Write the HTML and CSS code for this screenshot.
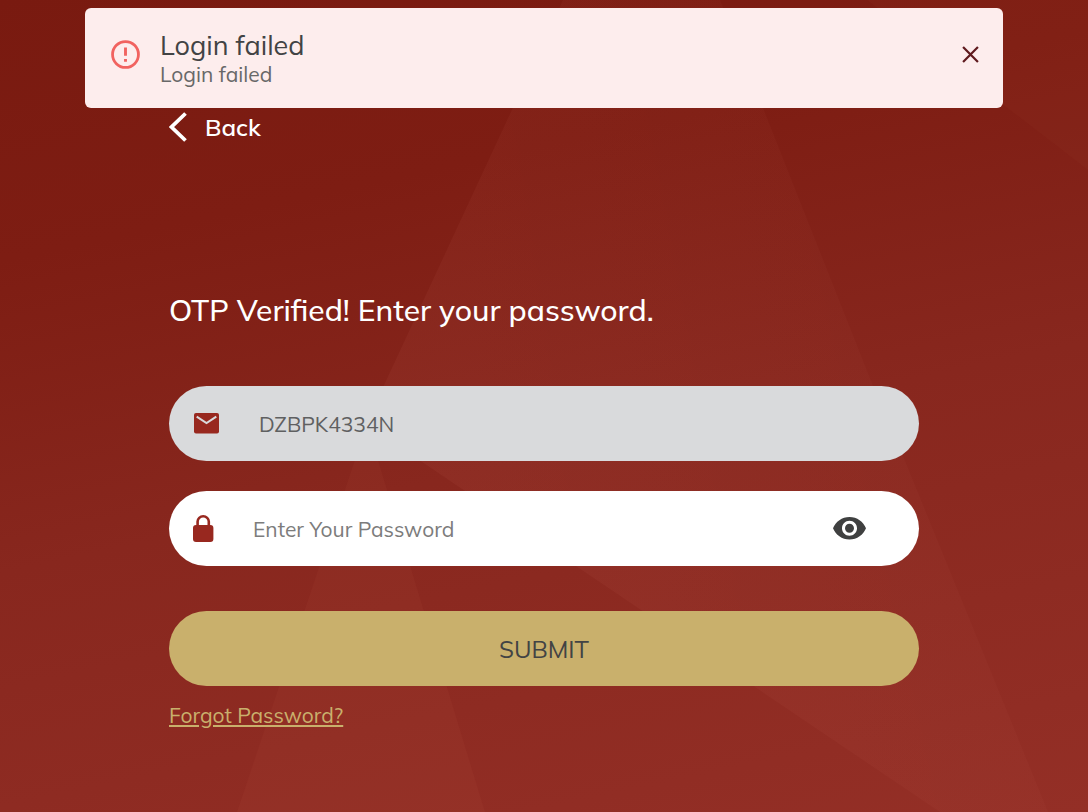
FILE: index.html
```html
<!DOCTYPE html>
<html lang="en">
<head>
<meta charset="utf-8">
<meta name="viewport" content="width=device-width, initial-scale=1">
<title>Login</title>
<link rel="stylesheet" href="styles.css">
</head>
<body>
<svg class="backdrop" viewBox="0 0 1088 812" preserveAspectRatio="none" aria-hidden="true">
  <defs>
    <linearGradient id="fade" gradientUnits="userSpaceOnUse" x1="440" y1="300" x2="1000" y2="100">
      <stop offset="0" stop-color="#ff9c8c" stop-opacity=".05"/>
      <stop offset="1" stop-color="#ff9c8c" stop-opacity=".015"/>
    </linearGradient>
  </defs>
  <path fill="url(#fade)" d="M563 0H720L763 108L873 386L905 461L1048 812H940L366 424Z"/>
  <path fill="#ff9c8c" fill-opacity=".04" d="M367 424L485 812H237Z"/>
  <path fill="#ff9c8c" fill-opacity=".025" d="M867 0H1088V170Z"/>
</svg>
<div class="alert" role="alert">
  <svg class="alert-icon" viewBox="0 0 28 28" aria-hidden="true">
    <circle cx="14" cy="14" r="12.5" fill="none" stroke="#f16360" stroke-width="2.7"/>
    <path fill="#f16360" d="M12.6 7.3h2.8v8h-2.8zM12.6 18.3h2.8v2.6h-2.8z"/>
  </svg>
  <div class="alert-text">
    <strong class="alert-title">Login failed</strong>
    <span class="alert-detail">Login failed</span>
  </div>
  <button class="alert-close" type="button" aria-label="Close">
    <svg viewBox="0 0 16 16" aria-hidden="true"><path d="M1 1L15 15M15 1L1 15" fill="none" stroke="#5f1a1e" stroke-width="2.1"/></svg>
  </button>
</div>
<main class="panel">
  <a class="back" href="#">
    <svg class="back-icon" viewBox="0 0 18 30" aria-hidden="true"><path d="M16.5 1.5L2.5 15L16.5 28.5" fill="none" stroke="#fff" stroke-width="3.8"/></svg>
    <span>Back</span>
  </a>
  <h1 class="heading">OTP Verified! Enter your password.</h1>
  <form class="form">
    <div class="field field-locked">
      <svg class="mail-icon" viewBox="0 0 26 21" aria-hidden="true"><rect width="25" height="20.5" rx="2" fill="#98281f"/><path d="M2.7 3.6L12.5 10L22.3 3.6" fill="none" stroke="#d9dadc" stroke-width="2"/></svg>
      <input class="input" type="text" value="DZBPK4334N" aria-label="User ID" disabled>
    </div>
    <div class="field">
      <svg class="lock-icon" viewBox="0 0 21 27" aria-hidden="true"><path d="M4.6 12V6.6a5.6 5.3 0 0 1 11.2 0V12" fill="none" stroke="#98281f" stroke-width="2.6"/><rect y="10" width="20.4" height="17" rx="3" fill="#98281f"/></svg>
      <input class="input" type="password" placeholder="Enter Your Password" aria-label="Password">
      <button class="reveal" type="button" aria-label="Show password">
        <svg viewBox="1 4.5 22 15" aria-hidden="true"><path fill="#3f4040" d="M12 4.5C7 4.5 2.73 7.61 1 12c1.73 4.39 6 7.5 11 7.5s9.27-3.11 11-7.5c-1.73-4.39-6-7.5-11-7.5zM12 17c-2.76 0-5-2.24-5-5s2.24-5 5-5 5 2.24 5 5-2.24 5-5 5zm0-8c-1.66 0-3 1.34-3 3s1.34 3 3 3 3-1.34 3-3-1.34-3-3-3z"/></svg>
      </button>
    </div>
    <button class="submit" type="submit">SUBMIT</button>
    <a class="forgot" href="#">Forgot Password?</a>
  </form>
</main>
</body>
</html>
```
FILE: styles.css
```css
* { box-sizing: border-box; }

body {
  position: relative;
  min-height: 100vh;
  margin: 0;
  padding: 8px;
  background: linear-gradient(168deg, #791a10 0%, #7e1d13 25%, #88271e 55%, #942f26 100%);
  font-family: Mulish, Muli, Lato, sans-serif;
}

button, input { font: inherit; }

button {
  padding: 0;
  border: 0;
  background: none;
  cursor: pointer;
}

svg { display: block; flex: none; }

.backdrop {
  position: absolute;
  inset: 0;
  z-index: -1;
  width: 100%;
  height: 100%;
}

.alert {
  display: flex;
  align-items: center;
  max-width: 918px;
  min-height: 100px;
  margin: 0 auto;
  padding: 20px 24px 20px 26px;
  border-radius: 6px;
  background: #fdeded;
}

.alert-icon { width: 29px; margin: 0 20px 7px 0; }
.alert-text { flex: 1; display: flex; flex-direction: column; padding-bottom: 2px; }
.alert-title { color: #424344; font-size: 27px; font-weight: 400; line-height: 34px; }
.alert-detail { color: #686868; font-size: 21px; line-height: 24px; }
.alert-close { margin-bottom: 7px; }
.alert-close svg { width: 17px; }

.panel { max-width: 750px; margin: 0 auto; }

.back {
  display: inline-flex;
  align-items: center;
  gap: 18px;
  padding-top: 4px;
  color: #fff;
  font-size: 24px;
  font-weight: 600;
  line-height: 30px;
  text-decoration: none;
}

.back-icon { width: 18px; }

.heading {
  margin: 142px 0 54px;
  color: #fff;
  font-size: 30px;
  font-weight: 500;
  line-height: 44px;
}

.form {
  display: flex;
  flex-direction: column;
}

.field {
  display: flex;
  align-items: center;
  height: 75px;
  margin-bottom: 30px;
  padding: 0 53px 0 24px;
  border-radius: 38px;
  background: #fff;
}

.field-locked { padding-left: 25px; background: #d9dadc; }

.input {
  flex: 1;
  min-width: 0;
  height: 48px;
  padding: 0;
  border: 0;
  outline: 0;
  background: transparent;
  color: #5f6061;
  font-size: 21px;
}

.input::placeholder { color: #7c7c7c; opacity: 1; }

.mail-icon { width: 26px; margin-right: 39px; }
.lock-icon { width: 21px; margin-right: 39px; }
.reveal svg { width: 33px; }

.submit {
  height: 75px;
  margin-top: 15px;
  border-radius: 38px;
  background: #c9b06c;
  color: #424344;
  font-size: 24px;
}

.forgot {
  align-self: flex-start;
  margin-top: 16px;
  color: #c9b06c;
  font-size: 21px;
  line-height: 26px;
  text-decoration: underline;
}
```
